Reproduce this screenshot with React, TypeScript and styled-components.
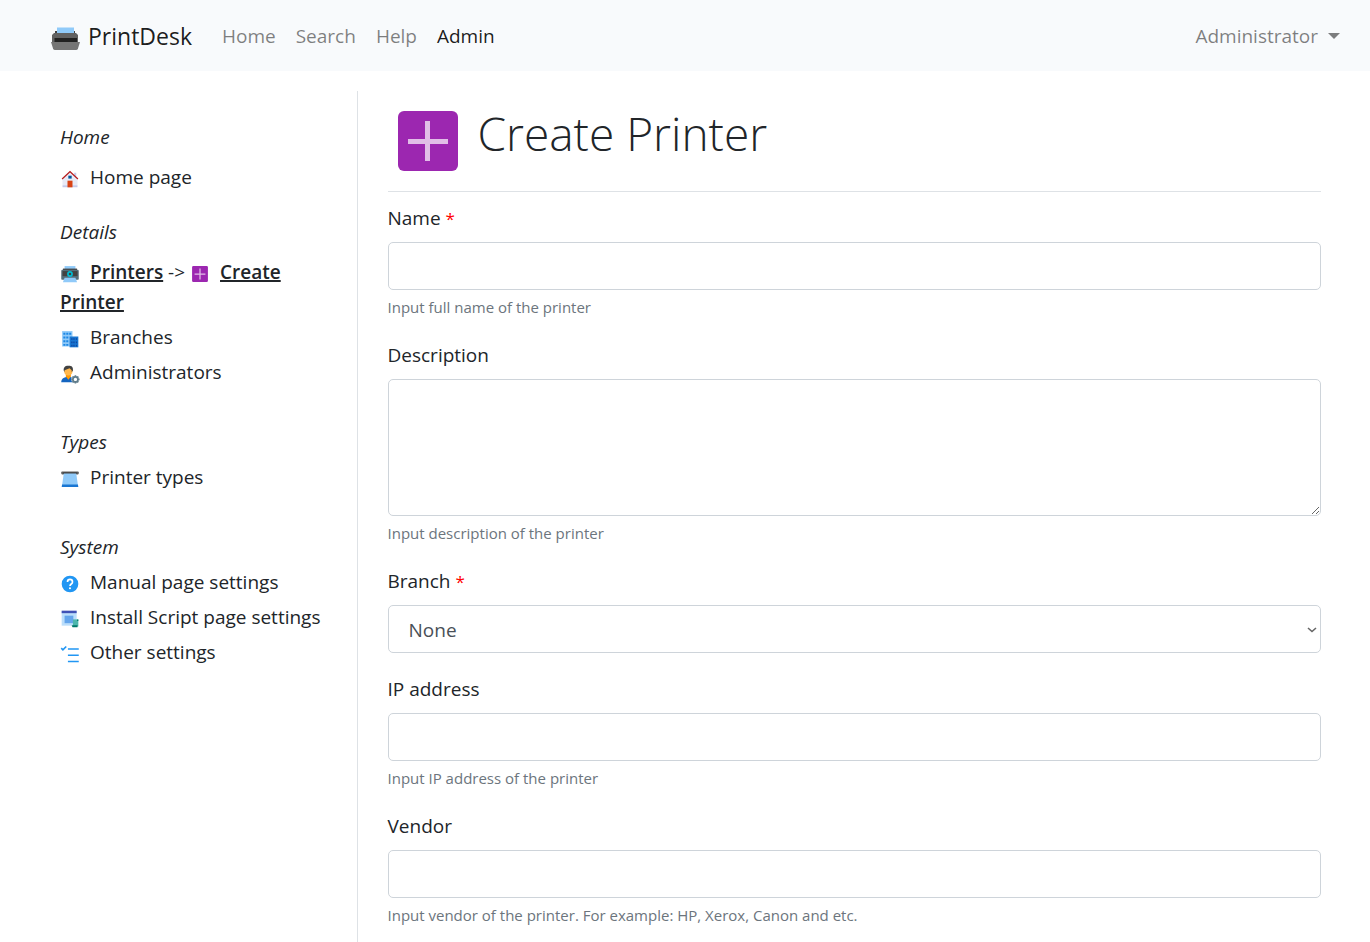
import React from 'react';
import styled, { createGlobalStyle } from 'styled-components';

const GlobalStyle = createGlobalStyle`
  *, *::before, *::after { box-sizing: border-box; }
  body {
    margin: 0;
    background: #fff;
    color: #212529;
    font-family: "Open Sans", "Noto Sans", sans-serif;
    font-size: 19px;
    line-height: 30px;
  }
  a { color: inherit; text-decoration: none; }
`;

const Navbar = styled.nav`
  display: flex;
  align-items: center;
  height: 71px;
  padding: 0 30px 0 50px;
  background: #f8fafc;
`;

const Brand = styled.a`
  display: flex;
  align-items: center;
  gap: 8px;
  margin-right: 20px;
  font-size: 23px;
  color: rgba(0, 0, 0, 0.9);
`;

const NavLink = styled.a<{ $active?: boolean }>`
  padding: 10px;
  color: ${(p) => (p.$active ? 'rgba(0, 0, 0, 0.9)' : 'rgba(0, 0, 0, 0.5)')};
`;

const UserMenu = styled.button`
  display: flex;
  align-items: center;
  gap: 10px;
  margin-left: auto;
  padding: 0;
  border: 0;
  background: none;
  font: inherit;
  color: rgba(0, 0, 0, 0.5);
`;

const Caret = styled.span`
  border-top: 6px solid currentColor;
  border-left: 6px solid transparent;
  border-right: 6px solid transparent;
`;

const Page = styled.div`
  display: flex;
  padding: 20px 30px 0;
`;

const Sidebar = styled.aside`
  flex: 0 0 25%;
  padding: 31px 30px 0;
  border-right: 1px solid #dee2e6;
`;

const Group = styled.section<{ $gap: number }>`
  margin-bottom: ${(p) => p.$gap}px;
`;

const GroupTitle = styled.h2<{ $spaced?: boolean }>`
  margin: 0 0 ${(p) => (p.$spaced ? 10 : 5)}px;
  font-size: inherit;
  font-weight: 400;
  font-style: italic;
`;

const Menu = styled.ul`
  display: flex;
  flex-direction: column;
  gap: 5px;
  margin: 0;
  padding: 0;
  list-style: none;
`;

const MenuLink = styled.a<{ $current?: boolean }>`
  font-weight: ${(p) => (p.$current ? 600 : 400)};
  text-decoration: ${(p) => (p.$current ? 'underline' : 'none')};
  text-decoration-thickness: 2px;
`;

const MenuIcon = styled.svg`
  width: 20px;
  height: 20px;
  margin-right: 10px;
  vertical-align: -5px;
`;

const Main = styled.main`
  flex: 1;
  min-width: 0;
  padding: 0 19px 26px 30px;
`;

const Header = styled.header`
  display: flex;
  gap: 20px;
  padding: 20px 10px;
  margin-bottom: 11px;
  border-bottom: 1px solid #dee2e6;
`;

const HeaderIcon = styled.svg`
  width: 60px;
  height: 60px;
`;

const Title = styled.h1`
  margin: -8px 0 0;
  font-size: 46px;
  line-height: 60px;
  font-weight: 300;
`;

const Field = styled.div`
  display: flex;
  flex-direction: column;
  margin-bottom: 21px;
`;

const Label = styled.label`
  margin-bottom: 9px;
`;

const Required = styled.span`
  font-size: 17px;
  line-height: 20px;
  color: #f00;
`;

const controlStyle = `
  display: block;
  width: 100%;
  margin: 0;
  padding: 8px 15px;
  border: 1px solid #ced4da;
  border-radius: 5px;
  background-color: #fff;
  color: #495057;
  font: inherit;
`;

const Input = styled.input`
  ${controlStyle}
  height: 48px;
`;

const TextArea = styled.textarea`
  ${controlStyle}
  height: 137px;
  resize: vertical;
`;

const SelectBox = styled.div`
  position: relative;
`;

const Select = styled.select`
  ${controlStyle}
  height: 48px;
  padding: 9px 20px 7px 20px;
  appearance: none;
`;

const Chevron = styled.svg`
  position: absolute;
  top: 20px;
  right: 4px;
  width: 10px;
  height: 10px;
  pointer-events: none;
`;

const Hint = styled.small`
  margin-top: 5px;
  font-size: 15px;
  line-height: 24px;
  color: #6c757d;
`;

const icons = {
  home: (
    <>
      <path fill="#e8eaf6" d="M42 39H6V23L24 6l18 17z" />
      <path fill="#c5cae9" d="m39 21-5-5V9h5zM6 39h36v5H6z" />
      <path fill="#b71c1c" d="M24 4.300 4 22.900l2 2.200L24 8.400l18 16.700 2-2.200z" />
      <path fill="#d84315" d="M18 28h12v16H18z" />
      <path fill="#01579b" d="M20 16h8v7h-8z" />
    </>
  ),
  printer: (
    <>
      <path fill="#90caf9" d="M11 5h26v10H11z" />
      <path fill="#424242" d="M7 11h34v5H7z" />
      <path fill="#546e7a" d="M6 14h36a3 3 0 0 1 3 3v19a2 2 0 0 1-2 2H5a2 2 0 0 1-2-2V17a3 3 0 0 1 3-3z" />
      <path fill="#424242" d="M6 17h36v12H6z" />
      <path fill="#90caf9" d="M11 33h26l4 11H7z" />
      <circle cx="24" cy="24" r="5" fill="none" stroke="#00bcd4" strokeWidth="4" />
    </>
  ),
  plus: (
    <>
      <rect x="5" y="5" width="38" height="38" rx="3" fill="#9c27b0" />
      <path fill="#e1bee7" d="M22.500 11h3v26h-3z M11 22.500h26v3H11z" />
    </>
  ),
  branches: (
    <>
      <path fill="#90caf9" d="M5 5h25v37H5z" />
      <path fill="#1e88e5" d="M8 9h5v5H8zm7 0h5v5h-5zm7 0h5v5h-5zM8 18h5v5H8zm7 0h5v5h-5zM8 27h5v5H8zm7 0h5v5h-5zM8 36h5v4H8zm7 0h5v4h-5z" />
      <path fill="#1976d2" d="M23 18h21v26H23z" />
      <path fill="#0d47a1" d="M27 22h3v4h-3zm5 0h3v4h-3zm6 0h3v4h-3zM27 30h3v4h-3zm5 0h3v4h-3zm6 0h3v4h-3zM27 38h3v4h-3zm5 0h3v4h-3zm6 0h3v4h-3z" />
    </>
  ),
  admins: (
    <>
      <path fill="#1565c0" d="M3 44c0-9 6-13 17-13s15 4 15 13z" />
      <path fill="#ff9800" d="m14 30 6 8 6-8v-6H14z" />
      <path fill="#ffb74d" d="M10 13c0-7 20-7 20 0v5c0 13-20 13-20 0z" />
      <path fill="#424242" d="M20 4c-9 0-12 5-11 12l2 3v-4l12-5 5 5v4l3-3c1-7-2-11-6-11l-1-1z" />
      <circle cx="37" cy="37" r="10" fill="#fff" />
      <circle cx="37" cy="37" r="6" fill="none" stroke="#607d8b" strokeWidth="4" />
      <path stroke="#607d8b" strokeWidth="4" d="M37 27v4m0 12v4M27 37h4m12 0h4M30 30l3 3m8 8 3 3M44 30l-3 3m-8 8-3 3" />
    </>
  ),
  types: (
    <>
      <rect x="3" y="6" width="42" height="7" rx="2" fill="#616161" />
      <path fill="#424242" d="M7 8h34v4H7z" />
      <path fill="#90caf9" d="M9 11h30l4 28H5z" />
      <path fill="#1976d2" d="M5 37h38l1 6H4z" />
    </>
  ),
  help: (
    <>
      <circle cx="24" cy="24" r="20" fill="#2196f3" />
      <path fill="none" stroke="#fff" strokeWidth="4" d="M18 19c0-8 12-8 12 0 0 5-6 5-6 10" />
      <circle cx="24" cy="34" r="2.500" fill="#fff" />
    </>
  ),
  script: (
    <>
      <path fill="#bbdefb" d="M4 6h36v34H4z" />
      <path fill="#3f51b5" d="M4 4h36v6H4z" />
      <path fill="#64a5ec" d="M11 16h21v18H11z" />
      <path fill="#4db6ac" d="M31 25h13v17H31z" />
      <path fill="#00796b" d="M28 39h14v5H30z M41 25h3v4h-3z" />
    </>
  ),
  other: (
    <path fill="none" stroke="#2196f3" strokeWidth="4" d="m3 10 4 4 8-8M19 12h26M19 27h26M19 42h26" />
  ),
};

function Icon({ name }: { name: keyof typeof icons }) {
  return (
    <MenuIcon viewBox="0 0 48 48" aria-hidden="true">
      {icons[name]}
    </MenuIcon>
  );
}

function MenuItem({ icon, children }: { icon: keyof typeof icons; children: React.ReactNode }) {
  return (
    <li>
      <Icon name={icon} />
      <MenuLink href="#">{children}</MenuLink>
    </li>
  );
}

function TextField({ id, label, hint, required }: { id: string; label: string; hint: string; required?: boolean }) {
  return (
    <Field>
      <Label htmlFor={id}>
        {label} {required && <Required>*</Required>}
      </Label>
      <Input id={id} type="text" />
      <Hint>{hint}</Hint>
    </Field>
  );
}

export default function App() {
  return (
    <>
      <GlobalStyle />
      <Navbar>
        <Brand href="#">
          <svg width="30" height="30" viewBox="0 0 30 30" aria-hidden="true">
            <path fill="#424242" d="M5 10h20v3H5z" />
            <path fill="#90caf9" d="M7 6.500h17V13H7z" />
            <path fill="#616161" d="M4 12h22l2 2v8H2v-8z" />
            <path fill="#757575" d="M1 21h29l-2 6.500q-.5 1.500-2 1.500H5q-1.500 0-2-1.500z" />
            <path fill="#212121" d="M4.500 17H27v4H4.500z" />
          </svg>
          PrintDesk
        </Brand>
        <NavLink href="#">Home</NavLink>
        <NavLink href="#">Search</NavLink>
        <NavLink href="#">Help</NavLink>
        <NavLink href="#" $active>Admin</NavLink>
        <UserMenu type="button">
          Administrator
          <Caret />
        </UserMenu>
      </Navbar>
      <Page>
        <Sidebar>
          <Group $gap={25}>
            <GroupTitle $spaced>Home</GroupTitle>
            <Menu>
              <MenuItem icon="home">Home page</MenuItem>
            </Menu>
          </Group>
          <Group $gap={40}>
            <GroupTitle $spaced>Details</GroupTitle>
            <Menu>
              <li>
                <Icon name="printer" />
                <MenuLink href="#" $current>Printers</MenuLink>
                {' -> '}
                <Icon name="plus" />
                <MenuLink href="#" $current>Create Printer</MenuLink>
              </li>
              <MenuItem icon="branches">Branches</MenuItem>
              <MenuItem icon="admins">Administrators</MenuItem>
            </Menu>
          </Group>
          <Group $gap={40}>
            <GroupTitle>Types</GroupTitle>
            <Menu>
              <MenuItem icon="types">Printer types</MenuItem>
            </Menu>
          </Group>
          <Group $gap={40}>
            <GroupTitle>System</GroupTitle>
            <Menu>
              <MenuItem icon="help">Manual page settings</MenuItem>
              <MenuItem icon="script">Install Script page settings</MenuItem>
              <MenuItem icon="other">Other settings</MenuItem>
            </Menu>
          </Group>
        </Sidebar>
        <Main>
          <Header>
            <HeaderIcon viewBox="0 0 60 60" aria-hidden="true">
              <rect width="60" height="60" rx="6" fill="#9c27b0" />
              <path fill="#e1bee7" d="M27 10h5v40h-5z M10 28h40v5H10z" />
            </HeaderIcon>
            <Title>Create Printer</Title>
          </Header>
          <form>
            <TextField id="name" label="Name" hint="Input full name of the printer" required />
            <Field>
              <Label htmlFor="description">Description</Label>
              <TextArea id="description" />
              <Hint>Input description of the printer</Hint>
            </Field>
            <Field>
              <Label htmlFor="branch">
                Branch <Required>*</Required>
              </Label>
              <SelectBox>
                <Select id="branch">
                  <option>None</option>
                </Select>
                <Chevron viewBox="0 0 10 10" aria-hidden="true">
                  <path d="m1 3 4 3.500L9 3" fill="none" stroke="#666" strokeWidth="1.600" />
                </Chevron>
              </SelectBox>
            </Field>
            <TextField id="ip" label="IP address" hint="Input IP address of the printer" />
            <TextField id="vendor" label="Vendor" hint="Input vendor of the printer. For example: HP, Xerox, Canon and etc." />
          </form>
        </Main>
      </Page>
    </>
  );
}
